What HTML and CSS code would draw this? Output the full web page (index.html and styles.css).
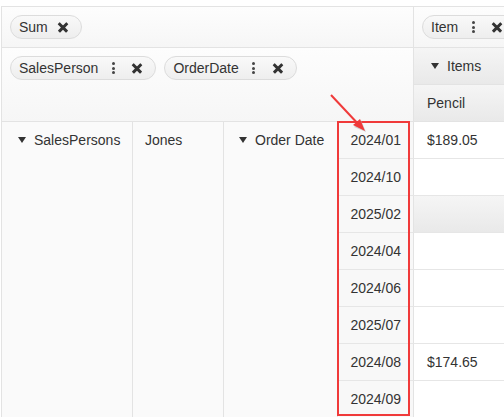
FILE: index.html
```html
<!DOCTYPE html>
<html>
<head>
<meta charset="utf-8">
<link rel="stylesheet" href="styles.css">
</head>
<body>
<div class="page">
  <div class="pivot">
    <div class="hdr hdr-values">
      <span class="chip"><span class="chip-text">Sum</span><span class="ico x"></span></span>
    </div>
    <div class="hdr hdr-colfields">
      <span class="chip"><span class="chip-text">Item</span><span class="ico dots"><i></i><i></i><i></i></span><span class="ico x"></span></span>
    </div>
    <div class="hdr hdr-rowfields">
      <span class="chip"><span class="chip-text">SalesPerson</span><span class="ico dots"><i></i><i></i><i></i></span><span class="ico x"></span></span>
      <span class="chip"><span class="chip-text">OrderDate</span><span class="ico dots"><i></i><i></i><i></i></span><span class="ico x"></span></span>
    </div>
    <div class="colhdr colhdr-items"><span class="tri"></span>Items</div>
    <div class="colhdr colhdr-pencil">Pencil</div>

    <div class="rowhdr rh1"><span class="tri"></span>SalesPersons</div>
    <div class="rowhdr rh2">Jones</div>
    <div class="rowhdr rh3"><span class="tri"></span>Order Date</div>

    <div class="date">2024/01</div><div class="val">$189.05</div>
    <div class="date">2024/10</div><div class="val"></div>
    <div class="date">2025/02</div><div class="val val-sub"></div>
    <div class="date">2024/04</div><div class="val"></div>
    <div class="date">2024/06</div><div class="val"></div>
    <div class="date">2025/07</div><div class="val"></div>
    <div class="date">2024/08</div><div class="val">$174.65</div>
    <div class="date">2024/09</div><div class="val"></div>
  </div>
  <div class="highlight"></div>
  <svg class="arrow" width="60" height="60" viewBox="0 0 60 60">
    <line x1="1" y1="1" x2="31" y2="33" stroke="#f03a3a" stroke-width="2"/>
    <polygon points="36,38 24,33 31,26" fill="#b8b8b8" opacity="0.6"/>
    <polygon points="35,37 23,31 30,25" fill="#f03a3a"/>
  </svg>
</div>
</body>
</html>
```
FILE: styles.css
```css
html, body {
  margin: 0;
  padding: 0;
  background: #fff;
}
.page {
  position: relative;
  width: 504px;
  height: 417px;
  overflow: hidden;
  font-family: "Liberation Sans", Arial, sans-serif;
  font-size: 14px;
  color: #333;
}
.pivot {
  margin: 6px 0 0 1px;
  border-top: 1px solid #e3e3e3;
  border-left: 1px solid #e3e3e3;
  display: grid;
  grid-template-columns: 131px 91px 114px 76px 140px;
  grid-template-rows: 41px 37px 37px repeat(8, 37px);
  width: 552px;
}
.pivot > div {
  box-sizing: border-box;
}
.hdr {
  background: linear-gradient(#fdfdfd, #f6f6f6);
  border-bottom: 1px solid #e3e3e3;
  padding: 8px;
  display: flex;
  align-items: flex-start;
  gap: 8px;
}
.hdr-values {
  grid-column: 1 / 5;
  grid-row: 1;
  border-right: 1px solid #e3e3e3;
}
.hdr-colfields {
  grid-column: 5;
  grid-row: 1;
}
.hdr-rowfields {
  grid-column: 1 / 5;
  grid-row: 2 / 4;
  border-right: 1px solid #e3e3e3;
}
.chip {
  display: inline-flex;
  align-items: center;
  box-sizing: border-box;
  height: 24px;
  padding: 0 8px;
  border: 1px solid #dcdcdc;
  border-radius: 12px;
  background: linear-gradient(#f9f9f9, #eeeeee);
  white-space: nowrap;
}
.chip-text {
  line-height: 16px;
}
.ico {
  width: 20px;
  height: 16px;
  display: inline-flex;
  align-items: center;
  justify-content: center;
  position: relative;
}
.chip-text + .ico {
  margin-left: 5px;
}
.ico + .ico {
  margin-left: 4px;
}
.dots {
  flex-direction: column;
  gap: 1.5px;
}
.dots i {
  display: block;
  width: 3px;
  height: 3px;
  border-radius: 50%;
  background: #444;
}
.x::before, .x::after {
  content: "";
  position: absolute;
  left: 4px;
  top: 7px;
  width: 12px;
  height: 2.6px;
  background: #333;
  border-radius: 0.5px;
}
.x::before { transform: rotate(45deg); }
.x::after { transform: rotate(-45deg); }

.colhdr {
  grid-column: 5;
  background: linear-gradient(#f5f5f5, #e9e9e9);
  border-bottom: 1px solid #e3e3e3;
  display: flex;
  align-items: center;
  padding-left: 13px;
}
.colhdr-items {
  grid-row: 2;
  padding-left: 17px;
}
.colhdr-pencil {
  grid-row: 3;
}
.tri {
  display: inline-block;
  width: 0;
  height: 0;
  border-left: 4px solid transparent;
  border-right: 4px solid transparent;
  border-top: 6px solid #333;
  margin-right: 8px;
  position: relative;
  top: 0px;
}
.rowhdr {
  grid-row: 4 / 12;
  background: #fafafa;
  border-right: 1px solid #e3e3e3;
  padding-top: 10px;
  line-height: 17px;
}
.rh1 { grid-column: 1; padding-left: 16px; }
.rh2 { grid-column: 2; padding-left: 12px; }
.rh3 { grid-column: 3; padding-left: 15px; }
.rh1 .tri, .rh3 .tri { top: -2px; }
.date {
  grid-column: 4;
  background: #f8f8f8;
  border-right: 1px solid #e3e3e3;
  border-bottom: 1px solid #e6e6e6;
  display: flex;
  align-items: center;
  justify-content: flex-end;
  padding-right: 12px;
}
.val {
  grid-column: 5;
  background: #fff;
  border-bottom: 1px solid #e6e6e6;
  display: flex;
  align-items: center;
  padding-left: 13px;
}
.val-sub {
  background: linear-gradient(#f5f5f5, #e9e9e9);
}
.highlight {
  position: absolute;
  left: 337px;
  top: 121px;
  width: 73px;
  height: 295px;
  box-sizing: border-box;
  border: 2px solid #f03a3a;
}
.arrow {
  position: absolute;
  left: 330px;
  top: 94px;
  overflow: visible;
}
```
